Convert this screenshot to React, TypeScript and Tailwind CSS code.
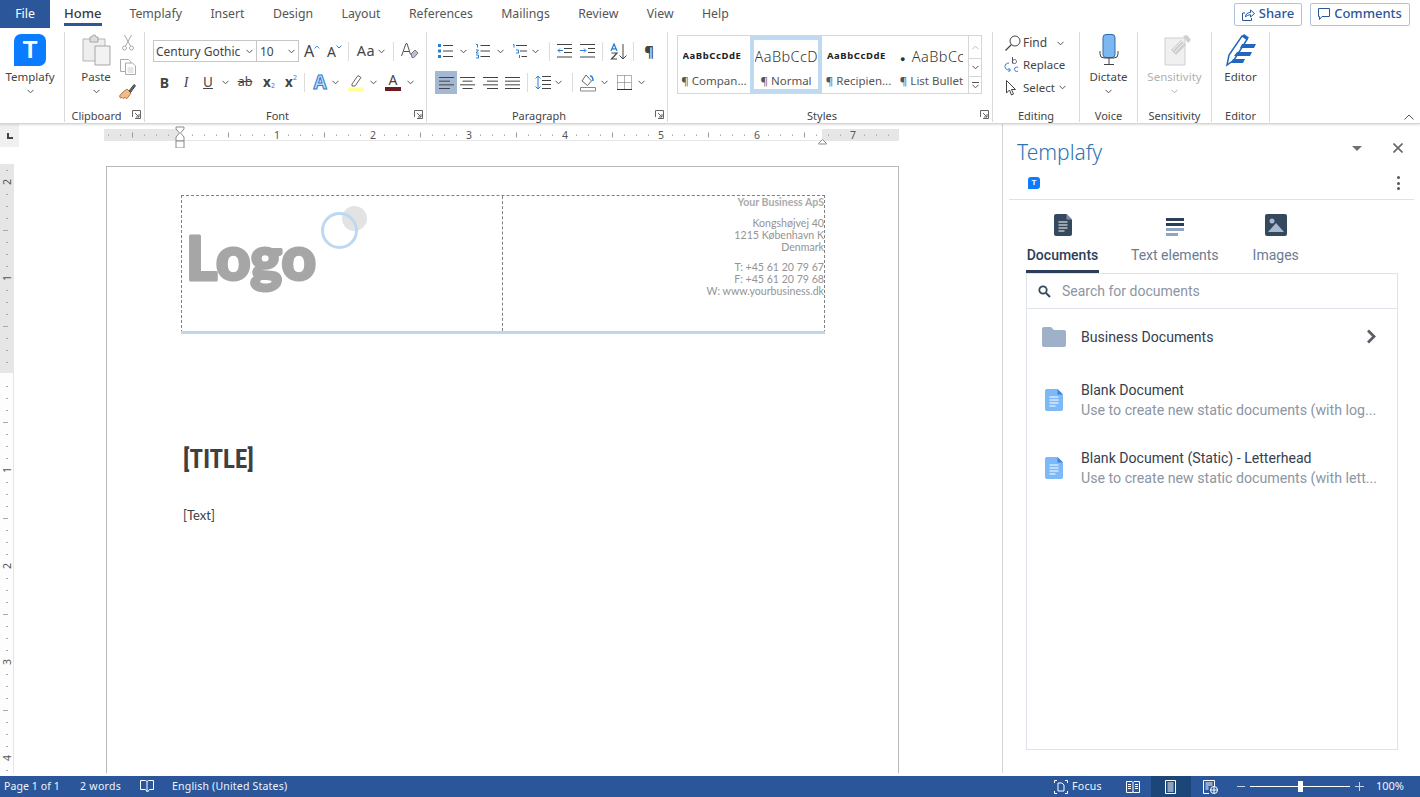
import React from "react";

const Chev = ({ c = "#555", cls = "" }: { c?: string; cls?: string }) => (
  <svg width="7" height="5" viewBox="0 0 7 5" className={"shrink-0 " + cls}><path d="M.5 .8 3.5 3.8 6.5 .8" fill="none" stroke={c} strokeWidth="1" /></svg>
);
const Launcher = () => (
  <svg width="9" height="9" viewBox="0 0 9 9" className="absolute right-[3px] bottom-[3px]"><path d="M.5 7V.5H8.5V8.5H3M3 3l4 4M7 4v3H4" fill="none" stroke="#666" strokeWidth="1" /></svg>
);
const Sep = ({ cls }: { cls: string }) => <div className={"w-px h-[19px] bg-[#dcdcdc] shrink-0 " + cls} />;
const B = ({ cls, children }: { cls: string; children?: React.ReactNode }) => (
  <div className={"flex items-center justify-center shrink-0 h-[22px] " + cls}>{children}</div>
);
const Group = ({ w, label, launcher, children }: { w: string; label: string; launcher?: boolean; children: React.ReactNode }) => (
  <div className={"relative flex flex-col shrink-0 h-[90px] border-r border-[#dadada] " + w}>
    <div className="flex-1 min-h-0">{children}</div>
    <div className={"h-[15px] text-center text-[11px] leading-[17px] text-[#444]" + (launcher ? " pr-[16px]" : "")}>{label}</div>
    {launcher && <Launcher />}
  </div>
);
const Big = ({ icon, label, gray, chev = true }: { icon: React.ReactNode; label: string; gray?: boolean; chev?: boolean }) => (
  <div className="flex flex-col items-center">
    <div className="h-[34px] mt-[1px] flex items-center justify-center">{icon}</div>
    <div className={"mt-[2px] h-[16px] text-[11.5px] leading-[16px] whitespace-nowrap " + (gray ? "text-[#b0b0b0]" : "text-[#444]")}>{label}</div>
    {chev && <Chev c={gray ? "#b0b0b0" : "#555"} cls="mt-[4px]" />}
  </div>
);
const Lines = ({ xs, w = 15 }: { xs: [number, number][]; w?: number }) => (
  <svg width={w} height="14" viewBox={`0 0 ${w} 14`}>
    {xs.map(([a, b], i) => <path key={i} d={`M${a} ${1.5 + i * (11 / (xs.length - 1))}H${b}`} stroke="#444" strokeWidth="1" />)}
  </svg>
);
const Bullets = () => (
  <svg width="15" height="14" viewBox="0 0 15 14"><path d="M0 0h3v3H0zM0 5.500h3v3H0zM0 11h3v3H0z" fill="#2b7cd3" /><path d="M5 1.500h10M5 7h10M5 12.500h10" stroke="#444" /></svg>
);
const Numbers = () => (
  <svg width="15" height="15" viewBox="0 0 15 15"><path d="M1 .5h1.500v3M1 6h2.400L1 9h2.600M1 11h2.500v3H1" fill="none" stroke="#2b7cd3" /><path d="M5.500 1.500H15M5.500 7H15M5.500 12.500H15" stroke="#444" /></svg>
);
const Multi = () => (
  <svg width="15" height="15" viewBox="0 0 15 15"><path d="M1 .5h1v3M4 6h2.500v3H4M7.500 11v3" fill="none" stroke="#2b7cd3" /><path d="M4 1.500H15M8 7H15M9.500 12.500H15" stroke="#444" /></svg>
);
const Outdent = () => (
  <svg width="15" height="14" viewBox="0 0 15 14"><path d="M0 .5h15M7 4.500h8M7 8.500h8M0 13h15" stroke="#444" /><path d="M6 6.500H1M3 4.500l-2 2 2 2" stroke="#2b7cd3" fill="none" /></svg>
);
const Indent = () => (
  <svg width="15" height="14" viewBox="0 0 15 14"><path d="M0 .5h15M8 4.500h7M8 8.500h7M0 13h15" stroke="#444" /><path d="M0 6.500h5.500M4 4.500l2 2-2 2" stroke="#2b7cd3" fill="none" /></svg>
);
const Doc = ({ c, lines = "#fff", fold = "#7d8fa6" }: { c: string; lines?: string; fold?: string }) => (
  <svg width="18" height="22" viewBox="0 0 18 22">
    <path d="M2 0h10.500L18 5.500V20a2 2 0 0 1-2 2H2a2 2 0 0 1-2-2V2a2 2 0 0 1 2-2z" fill={c} />
    <path d="M12.500 0 18 5.500h-5.500z" fill={fold} />
    <path d="M4.500 8h9M4.500 11h9M4.500 14h9M4.500 17h6" stroke={lines} strokeWidth="1.100" />
  </svg>
);
const Tpl = ({ cls, txt }: { cls: string; txt: string }) => (
  <div className={"flex items-center justify-center bg-[#0a7cff] text-white font-bold [font-family:'Liberation_Sans',sans-serif] " + cls + " " + txt}>T</div>
);
const StyleItem = ({ w, preview, label, active }: { w: string; preview: React.ReactNode; label: string; active?: boolean }) => (
  <div className={"flex flex-col items-center h-full shrink-0 overflow-hidden " + w + (active ? " border-[4px] border-[#bfd9f0] pt-[3px]" : " pt-[7px]")}>
    <div className="h-[27px] w-[63px] overflow-hidden flex items-center whitespace-nowrap">{preview}</div>
    <div className="text-[11.5px] leading-[16px] text-[#555] whitespace-nowrap mt-[3px]">{label}</div>
  </div>
);

const vTicks: number[] = [];
for (let y = 6; y < 612; y += 12) vTicks.push(y);

const HRuler = () => (
  <svg width="795" height="23" viewBox="0 0 795 23" className="shrink-0 block">
    <rect x="0" y="4" width="795" height="12" fill="#fff" />
    <rect x="0" y="4" width="76" height="12" fill="#e6e6e6" />
    <rect x="718" y="4" width="77" height="12" fill="#e6e6e6" />
    <path d="M0 15.500H795" stroke="#e6e6e6" />
    {Array.from({ length: 66 }).map((_, i) => {
      const x = 4 + i * 12;
      const rel = i - 6;
      if (((rel % 8) + 8) % 8 === 0) return null;
      if (((rel % 4) + 4) % 4 === 0) return <path key={i} d={`M${x + 0.5} 7.500v5`} stroke="#999" />;
      return <path key={i} d={`M${x + 0.5} 9.500v1.500`} stroke="#aaa" />;
    })}
    {[1, 2, 3, 4, 5, 6, 7].map((n) => (
      <text key={n} x={76 + n * 96 + 1} y="14" fontSize="10.5" fill="#555" textAnchor="middle" fontFamily="'Noto Sans',sans-serif">{n}</text>
    ))}
    <path d="M72 2h8v2l-3.500 4 3.500 4v4h-8v-4l3.500-4L72 4z" fill="#fff" stroke="#8a8a8a" />
    <path d="M72 16h8v7h-8z" fill="#fff" stroke="#8a8a8a" />
    <path d="M714.500 18.500l4-4 4 4v0.500h-8z" fill="#fff" stroke="#8a8a8a" />
  </svg>
);
const VRuler = () => (
  <svg width="14" height="612" viewBox="0 0 14 612" className="block shrink-0">
    <rect x="0" y="0" width="13" height="209" fill="#e6e6e6" />
    <rect x="0" y="209" width="13" height="403" fill="#fdfdfd" />
    <path d="M13.500 0V612" stroke="#e6e6e6" />
    {vTicks.map((y, i) => {
      const rel = i - 17;
      if (((rel % 8) + 8) % 8 === 0) return null;
      return <path key={y} d={((rel % 4) + 4) % 4 === 0 ? `M3 ${y + 0.5}h5` : `M6 ${y + 0.5}h2`} stroke="#aaa" />;
    })}
    {[[18, "2"], [114, "1"], [306, "1"], [402, "2"], [498, "3"], [594, "4"]].map(([y, t]) => (
      <text key={String(y)} transform={`translate(11 ${y}) rotate(-90)`} fontSize="10.5" fill="#555" textAnchor="middle" fontFamily="'Noto Sans',sans-serif">{t}</text>
    ))}
  </svg>
);

export default function App() {
  const tabs = ["Templafy", "Insert", "Design", "Layout", "References", "Mailings", "Review", "View", "Help"];
  return (
    <div className="w-[1420px] h-[797px] overflow-hidden bg-white flex flex-col text-[#444] [font-family:'Noto_Sans',sans-serif]">
      {/* Tab bar */}
      <div className="h-[28px] flex items-center shrink-0">
        <div className="w-[50px] h-full bg-[#2b579a] text-white text-[12.3px] flex items-center justify-center">File</div>
        <div className="flex items-center h-full text-[12.3px] pl-[14px]">
          <div className="relative mr-[28px] h-full flex items-center font-medium text-[#3a3a3a] text-[13px]">
            Home
            <div className="absolute left-0 right-[-1px] top-[23px] h-[3px] bg-[#2b579a]" />
          </div>
          {tabs.map((t) => (
            <div key={t} className="mr-[28.4px] whitespace-nowrap text-[#555]">{t}</div>
          ))}
        </div>
        <div className="ml-auto flex items-center mr-[10px] gap-[8px]">
          <div className="h-[23px] w-[68px] border border-[#b0c4de] rounded-[2px] flex items-center justify-center gap-[4px] text-[13px] font-medium text-[#2b579a]">
            <svg width="13" height="13" viewBox="0 0 13 13"><path d="M3 5H.5v7.500h9V10M3.500 9c0-3 2-4.500 5-4.500V2l4 3.500-4 3.500V6.800c-2 0-4 .7-5 2.200z" fill="none" stroke="#2b579a" /></svg>
            Share
          </div>
          <div className="h-[23px] w-[100px] border border-[#b0c4de] rounded-[2px] flex items-center justify-center gap-[4px] text-[13px] font-medium text-[#2b579a]">
            <svg width="12" height="12" viewBox="0 0 12 12"><path d="M.5 .5h11v8H4L1.500 11.500V8.500H.5z" fill="none" stroke="#2b579a" /></svg>
            Comments
          </div>
        </div>
      </div>

      {/* Ribbon */}
      <div className="relative h-[96px] shrink-0 flex pt-[4px] border-b border-[#d4d4d4] shadow-[0_1px_2px_rgba(0,0,0,0.12)] z-10 bg-white">
        <Group w="w-[65px]" label="">
          <div className="w-[60px]">
            <Big label="Templafy" icon={<Tpl cls="w-[32px] h-[32px] rounded-[7px] rounded-bl-none" txt="text-[24px]" />} />
          </div>
        </Group>

        <Group w="w-[80px]" label="Clipboard" launcher>
          <div className="flex">
            <div className="ml-[15px]">
              <Big
                label="Paste"
                icon={
                  <svg width="30" height="32" viewBox="0 0 30 32" className="ml-[2px]">
                    <path d="M1 5h22v22H1z" fill="#eee" stroke="#b5b5b5" />
                    <path d="M8 3h2a2 2 0 0 1 4 0h2v5H8z" fill="#ddd" stroke="#a5a5a5" />
                    <path d="M13 12h15v19H13z" fill="#f2f2f2" stroke="#a5a5a5" />
                  </svg>
                }
              />
            </div>
            <div className="flex flex-col items-center ml-[7px] mt-[3px] gap-[8px]">
              <svg width="12" height="16" viewBox="0 0 12 16"><path d="M2.500 0l6 11M9.500 0l-6 11" stroke="#aaa" fill="none" /><circle cx="2.500" cy="13" r="2" fill="none" stroke="#aaa" /><circle cx="9.500" cy="13" r="2" fill="none" stroke="#aaa" /></svg>
              <svg width="16" height="16" viewBox="0 0 16 16"><path d="M.5 .5h8l2 2v10H.5z" fill="#fff" stroke="#aaa" /><path d="M5.500 4h7l3 3v8.500h-10z" fill="#fff" stroke="#aaa" /><path d="M7.500 9h6M7.500 11h6M7.500 13h6" stroke="#ccc" /></svg>
              <svg width="17" height="16" viewBox="0 0 17 16"><path d="M8 6l4 4-4 5.500-2-1L4 15.500l-1-1-1.500.5L.5 13l2.500-3z" fill="#eebd8b" stroke="#b5763c" /><path d="M10 8l5-6.500 1.500 1.200-5 6.800z" fill="#666" stroke="#444" /></svg>
            </div>
          </div>
        </Group>

        <Group w="w-[282px]" label="Font" launcher>
          <div className="flex items-center h-[22px] mt-[8px] text-[#444]">
            <div className="ml-[8px] w-[104px] h-[22px] border border-[#c6c6c6] flex items-center pl-[2px] pr-[3px] pt-px text-[12px] shrink-0 justify-between">
              Century Gothic <Chev />
            </div>
            <div className="ml-[-1px] w-[43px] h-[22px] border border-[#c6c6c6] flex items-center pl-[3px] pr-[3px] pt-px text-[12px] shrink-0 justify-between">
              10 <Chev />
            </div>
            <B cls="ml-[5px] w-[16px] text-[16px]">A<svg width="6" height="4" viewBox="0 0 6 4" className="mb-[8px]"><path d="M.5 3.500 3 1l2.500 2.500" fill="none" stroke="#2b7cd3" /></svg></B>
            <B cls="ml-[7px] w-[15px] text-[14px]">A<svg width="6" height="4" viewBox="0 0 6 4" className="mb-[8px]"><path d="M.5 .5 3 3l2.500-2.500" fill="none" stroke="#2b7cd3" /></svg></B>
            <Sep cls="ml-[6px]" />
            <B cls="ml-[7px] w-[20px] text-[14.5px] tracking-[0.5px]">Aa</B>
            <Chev cls="ml-[2px]" />
            <Sep cls="ml-[8px]" />
            <B cls="ml-[7px] w-[18px]">
              <svg width="18" height="17" viewBox="0 0 18 17"><path d="M.5 13 5 .5h1l3.500 11M2.500 8.500h6" stroke="#555" fill="none" /><path d="M10 11l4-4 3 3-4 4.500h-2z" fill="#c5b8d8" stroke="#777" /></svg>
            </B>
          </div>
          <div className="flex items-center h-[22px] mt-[9px] text-[#444]">
            <B cls="ml-[15px] w-[9px] text-[14px] font-bold">B</B>
            <B cls="ml-[13px] w-[8px] text-[14px] italic [font-family:'Liberation_Serif',serif]">I</B>
            <B cls="ml-[13px] w-[10px] text-[13.5px] underline">U</B>
            <Chev cls="ml-[9px]" />
            <B cls="ml-[8px] w-[16px] text-[12.5px] line-through">ab</B>
            <B cls="ml-[10px] w-[12px] text-[13.5px] font-bold">x<span className="text-[7px] font-normal text-[#2b7cd3] mt-[8px]">2</span></B>
            <B cls="ml-[10px] w-[12px] text-[13.5px] font-bold">x<span className="text-[7px] font-normal text-[#2b7cd3] mb-[8px]">2</span></B>
            <Sep cls="ml-[7px]" />
            <B cls="ml-[7px] w-[16px]">
              <span className="text-[19px] font-bold leading-none text-[#bcdcf7] [-webkit-text-stroke:1px_#2b7cd3]">A</span>
            </B>
            <Chev cls="ml-[4px]" />
            <B cls="ml-[9px] w-[16px]">
              <svg width="16" height="17" viewBox="0 0 16 17"><path d="M4 10 10 1.500l3 2-6 8.500H4z" fill="#fff" stroke="#666" /><path d="M0 13.500h16V17H0z" fill="#ffff99" /></svg>
            </B>
            <Chev cls="ml-[6px]" />
            <B cls="ml-[8px] w-[16px]">
              <div className="flex flex-col items-center w-full">
                <span className="text-[14px] leading-[14px] text-[#444]">A</span>
                <div className="w-full h-[4px] bg-[#6b1c23]" />
              </div>
            </B>
            <Chev cls="ml-[6px]" />
          </div>
        </Group>

        <Group w="w-[241px]" label="Paragraph" launcher>
          <div className="flex items-center h-[22px] mt-[8px]">
            <B cls="ml-[11px] w-[15px]"><Bullets /></B>
            <Chev cls="ml-[7px]" />
            <B cls="ml-[8px] w-[15px]"><Numbers /></B>
            <Chev cls="ml-[7px]" />
            <B cls="ml-[8px] w-[15px]"><Multi /></B>
            <Chev cls="ml-[5px]" />
            <Sep cls="ml-[10px]" />
            <B cls="ml-[7px] w-[15px]"><Outdent /></B>
            <B cls="ml-[8px] w-[15px]"><Indent /></B>
            <Sep cls="ml-[7px]" />
            <B cls="ml-[7px] w-[17px]">
              <svg width="17" height="17" viewBox="0 0 17 17">
                <path d="M1 8 4 1l3 7M2 5.800h4" fill="none" stroke="#2b7cd3" strokeWidth="1.300" />
                <path d="M1.500 10h5.500l-5.500 6h5.500" fill="none" stroke="#444" strokeWidth="1.200" />
                <path d="M13 1v15M9.500 12.500 13 16l3.500-3.500" fill="none" stroke="#444" />
              </svg>
            </B>
            <Sep cls="ml-[6px]" />
            <B cls="ml-[9px] w-[12px] text-[15px] font-bold">¶</B>
          </div>
          <div className="flex items-center h-[23px] mt-[9px]">
            <div className="ml-[8px] w-[22px] h-[23px] bg-[#a4b8d3] flex items-center justify-center shrink-0">
              <Lines xs={[[0, 15], [0, 11], [0, 15], [0, 11]]} />
            </div>
            <B cls="ml-[3px] w-[15px]"><Lines xs={[[0, 15], [2.5, 12.5], [0, 15], [2.5, 12.5]]} /></B>
            <B cls="ml-[8px] w-[15px]"><Lines xs={[[0, 15], [4, 15], [0, 15], [4, 15]]} /></B>
            <B cls="ml-[7px] w-[15px]"><Lines xs={[[0, 15], [0, 15], [0, 15], [0, 15]]} /></B>
            <Sep cls="ml-[7px]" />
            <B cls="ml-[7px] w-[16px]">
              <svg width="16" height="15" viewBox="0 0 16 15"><path d="M3 1v13M.5 3.500 3 1l2.500 2.500M.5 11.500 3 14l2.500-2.500" fill="none" stroke="#2b7cd3" /><path d="M7 1.500h9M7 5.500h9M7 9.500h9M7 13.500h9" stroke="#444" /></svg>
            </B>
            <Chev cls="ml-[4px]" />
            <Sep cls="ml-[10px]" />
            <B cls="ml-[7px] w-[16px]">
              <svg width="16" height="18" viewBox="0 0 16 18"><path d="M6 1l5.500 6-4 4.500L2 7z" fill="#fff" stroke="#666" /><path d="M10 2c2 0 3 2 3 5" fill="none" stroke="#2b7cd3" strokeWidth="1.500" /><path d="M.5 13.500h15v3.500H.5z" fill="#fff" stroke="#888" /></svg>
            </B>
            <Chev cls="ml-[5px]" />
            <B cls="ml-[9px] w-[15px]">
              <svg width="15" height="15" viewBox="0 0 15 15"><path d="M.5 .5h14M.5 .5v14M14.500 .5v14M7.500 .5v14M.5 7.500h14" stroke="#666" strokeDasharray="1 1" fill="none" /><path d="M0 14.500h15" stroke="#333" /></svg>
            </B>
            <Chev cls="ml-[6px]" />
          </div>
        </Group>

        <Group w="w-[325px]" label="Styles" launcher>
          <div className="ml-[9px] mt-[3px] w-[305px] h-[59px] border border-[#d6d6d6] flex">
            <StyleItem w="w-[72px]" label="¶ Compan..." preview={<span className="text-[9.5px] font-bold text-[#222] tracking-[0.55px]">AaBbCcDdE</span>} />
            <StyleItem w="w-[72px]" active label="¶ Normal" preview={<span className="text-[14.5px] text-[#333] font-light tracking-[0.4px]">AaBbCcD</span>} />
            <StyleItem w="w-[73px]" label="¶ Recipien..." preview={<span className="text-[9.5px] font-bold text-[#222] tracking-[0.55px]">AaBbCcDdE</span>} />
            <StyleItem w="w-[73px]" label="¶ List Bullet" preview={<span className="text-[14.5px] text-[#333] font-light tracking-[0.4px]"><span className="text-[9px] mr-[6px]">●</span>AaBbCc</span>} />
            <div className="flex flex-col w-[14px] shrink-0 border-l border-[#d6d6d6]">
              <div className="h-[22px] flex items-center justify-center"><Chev c="#bbb" cls="rotate-180" /></div>
              <div className="h-[19px] border-y border-[#d6d6d6] flex items-center justify-center"><Chev /></div>
              <div className="flex-1 flex flex-col items-center justify-center gap-[1px]"><div className="w-[7px] h-px bg-[#555]" /><Chev /></div>
            </div>
          </div>
        </Group>

        <Group w="w-[87px]" label="Editing">
          <div className="flex flex-col text-[12px] text-[#444] mt-[1px]">
            <div className="flex items-center h-[20px]">
              <svg width="16" height="17" viewBox="0 0 16 17" className="ml-[12px]"><circle cx="10" cy="6" r="5" fill="none" stroke="#444" /><path d="M6.500 9.500.5 15.500" stroke="#444" strokeWidth="1.300" /></svg>
              <span className="ml-[2px]">Find</span>
              <Chev cls="ml-[10px]" />
            </div>
            <div className="flex items-center h-[23px]">
              <svg width="15" height="17" viewBox="0 0 15 17" className="ml-[11px]">
                <path d="M5 7C2.500 7 1 8.500 1 10.500S2.500 14 5 14h1M4.500 12l2 2-2 2" fill="none" stroke="#2b7cd3" />
                <path d="M8.500 1v6.500M8.500 5.500a2 2 0 1 1 0 .1" fill="none" stroke="#555" />
                <path d="M14 11.500a2.200 2.200 0 1 0 0 3.500" fill="none" stroke="#2b7cd3" />
              </svg>
              <span className="ml-[4px] text-[11.5px]">Replace</span>
            </div>
            <div className="flex items-center h-[23px]">
              <svg width="12" height="16" viewBox="0 0 12 16" className="ml-[13px]"><path d="M.5 .5v12.500l3-3 2 5 2-1-2-4.500h4z" fill="#fff" stroke="#444" /></svg>
              <span className="ml-[5px] text-[11.5px]">Select</span>
              <Chev cls="ml-[4px]" />
            </div>
          </div>
        </Group>

        <Group w="w-[58px]" label="Voice">
          <Big
            label="Dictate"
            icon={
              <svg width="20" height="32" viewBox="0 0 20 32">
                <rect x="4" y="0.500" width="12" height="23" rx="3" fill="#7cb7f0" stroke="#2b6cb0" />
                <path d="M1 17v3a4 4 0 0 0 4 4h10a4 4 0 0 0 4-4v-3M10 24v6M5 30.500h10" fill="none" stroke="#444" />
              </svg>
            }
          />
        </Group>

        <Group w="w-[74px]" label="Sensitivity">
          <Big
            label="Sensitivity"
            gray
            icon={
              <svg width="28" height="32" viewBox="0 0 28 32" className="ml-[6px]">
                <path d="M1 4h20v27H1z" fill="#f0f0f0" stroke="#cfcfcf" />
                <path d="M7 16 17 6l5 5-10 10z" fill="#cfcfcf" />
                <path d="M19 2l4-1 4 5-3 3z" fill="#cfcfcf" />
                <path d="M9 16l9-9M11 18l9-9" stroke="#f0f0f0" />
              </svg>
            }
          />
        </Group>

        <Group w="w-[58px]" label="Editor">
          <Big
            chev={false}
            label="Editor"
            icon={
              <svg width="31" height="34" viewBox="0 0 31 34">
                <path d="M2 32 4 22 17 3l5 3.500L9 27z" fill="#fff" stroke="#2167c0" strokeWidth="1.500" />
                <path d="M17 3l2-2 5 3.500-2 2.500z" fill="#2167c0" />
                <path d="M17 11h14l-2 4H15zM12 19h15l-2 4H9zM8 26h12l-2 4H6z" fill="#2167c0" />
              </svg>
            }
          />
        </Group>

        <svg width="10" height="6" viewBox="0 0 10 6" className="absolute right-[6px] bottom-[3px]"><path d="M.5 5.500 5 1l4.500 4.500" fill="none" stroke="#555" /></svg>
      </div>

      {/* Main */}
      <div className="flex-1 flex min-h-0">
        <div className="w-[1003px] shrink-0 border-r border-[#d4d4d4] flex flex-col overflow-hidden mb-[3px]">
          <div className="flex h-[40px] shrink-0">
            <div className="w-[19px] h-[23px] bg-[#f0f0f0] flex items-center justify-center shrink-0">
              <svg width="6" height="6" viewBox="0 0 6 6"><path d="M1 0v5h5" fill="none" stroke="#444" strokeWidth="2" /></svg>
            </div>
            <div className="ml-[85px] mt-px"><HRuler /></div>
          </div>
          <div className="flex flex-1 min-h-0">
            <VRuler />
            <div className="ml-[92px] mt-[2px] w-[793px] h-[700px] border border-[#b8b8b8] shrink-0 bg-white">
              <div className="ml-[74px] mt-[28px] w-[644px] h-[138px] flex border-x border-t border-dashed border-[#808080] relative">
                <div className="w-[321px] h-[135px] border-r border-dashed border-[#808080] relative shrink-0 overflow-hidden">
                  <svg width="150" height="80" viewBox="0 0 150 80" className="absolute left-[1px] top-[30px]">
                    <text x="3" y="54" fontSize="61" fontWeight="900" fill="#a6a6a6" stroke="#a6a6a6" strokeWidth="3" strokeLinejoin="round" textLength="130" lengthAdjust="spacingAndGlyphs" fontFamily="'Lato',sans-serif">Logo</text>
                  </svg>
                  <div className="absolute left-[160px] top-[10px] w-[25px] h-[25px] rounded-full bg-[#e3e3e3]" />
                  <div className="absolute left-[139px] top-[16px] w-[37px] h-[37px] rounded-full border-[3px] border-[#bdd9f2]" />
                </div>
                <div className="flex-1 h-[135px] overflow-hidden flex flex-col items-end text-[10.6px] leading-[12px] text-[#949494] whitespace-nowrap [font-family:'Lato',sans-serif]">
                  <div className="font-bold text-[#ababab]">Your Business ApS</div>
                  <div className="mt-[9px]">Kongshøjvej 40</div>
                  <div>1215 København K</div>
                  <div>Denmark</div>
                  <div className="mt-[8px]">T: +45 61 20 79 67</div>
                  <div>F: +45 61 20 79 68</div>
                  <div>W: www.yourbusiness.dk</div>
                </div>
                <div className="absolute left-[-1px] right-[-1px] bottom-[-1px] h-[3px] bg-[#bdd7ee]" />
              </div>
              <div className="ml-[76px] mt-[109px] text-[25px] leading-[36px] font-bold text-[#404040] [font-family:'Liberation_Sans_Narrow','Roboto_Condensed','Liberation_Sans',sans-serif]">[TITLE]</div>
              <div className="ml-[76px] mt-[28px] text-[13px] leading-[18px] text-[#404040] [font-family:'Lato',sans-serif]">[Text]</div>
            </div>
          </div>
        </div>

        {/* Side pane */}
        <div className="flex-1 min-w-0 [font-family:'Roboto',sans-serif]">
          <div className="h-[50px] flex items-start relative">
            <div className="ml-[14px] mt-[14px] text-[21px] leading-[28px] font-light text-[#2e74b5] [font-family:'Noto_Sans',sans-serif]">Templafy</div>
            <svg width="10" height="5" viewBox="0 0 10 5" className="ml-[250px] mt-[22px]"><path d="M0 0h10L5 5z" fill="#707070" /></svg>
            <svg width="10" height="10" viewBox="0 0 10 10" className="ml-[31px] mt-[19px]"><path d="M.5 .5l9 9M9.500 .5l-9 9" stroke="#666" strokeWidth="1.600" /></svg>
          </div>
          <div className="h-[26px] mx-[6px] border-b border-[#dde2ec] flex items-start">
            <Tpl cls="ml-[19px] mt-[3px] w-[12px] h-[12px] rounded-[3px] rounded-bl-none" txt="text-[8px]" />
            <div className="ml-auto mr-[14px] mt-[2px] flex flex-col gap-[2.5px]">
              <div className="w-[3px] h-[3px] rounded-full bg-[#555]" />
              <div className="w-[3px] h-[3px] rounded-full bg-[#555]" />
              <div className="w-[3px] h-[3px] rounded-full bg-[#555]" />
            </div>
          </div>
          <div className="ml-[23px] mr-[22px] flex flex-col">
            <div className="flex h-[73px] text-[14px] text-[#6b7c93]">
              <div className="w-[73px] border-b-[3px] border-[#2c3e5a] flex flex-col items-center pt-[14px] text-[#2c3e5a] font-medium">
                <Doc c="#34495e" />
                <div className="mt-[9px] leading-[20px]">Documents</div>
              </div>
              <div className="ml-[32px] flex flex-col items-center pt-[18px]">
                <svg width="18" height="18" viewBox="0 0 18 18"><path d="M0 0h18v3H0zM0 5h18v3H0z" fill="#2c3e5a" /><path d="M0 10h18v3H0z" fill="#8ea6c4" /><path d="M0 15h12v3H0z" fill="#8ea6c4" /></svg>
                <div className="mt-[9px] leading-[20px]">Text elements</div>
              </div>
              <div className="ml-[34px] flex flex-col items-center pt-[14px]">
                <svg width="22" height="22" viewBox="0 0 22 22"><rect width="22" height="22" rx="2" fill="#34495e" /><circle cx="7" cy="7" r="2.500" fill="#a5b8d0" /><path d="M3 18l8-9 8 9z" fill="#a5b8d0" /></svg>
                <div className="mt-[9px] leading-[20px]">Images</div>
              </div>
            </div>
            <div className="w-[372px] h-[477px] border border-[#dfe3ee] text-[14.1px]">
              <div className="h-[35px] border-b border-[#dfe3ee] flex items-center">
                <svg width="13" height="13" viewBox="0 0 13 13" className="ml-[11px]"><circle cx="5" cy="5" r="3.700" fill="none" stroke="#34495e" strokeWidth="1.800" /><path d="M8 8l4 4" stroke="#34495e" strokeWidth="2" /></svg>
                <span className="ml-[11px] text-[#8c96a3] text-[14px]">Search for documents</span>
              </div>
              <div className="flex items-center h-[58px]">
                <svg width="24" height="20" viewBox="0 0 24 20" className="ml-[15px] mb-[3px]"><path d="M2 0h7l3 3h10a2 2 0 0 1 2 2v13a2 2 0 0 1-2 2H2a2 2 0 0 1-2-2V2a2 2 0 0 1 2-2z" fill="#9fb0c9" /></svg>
                <span className="ml-[15px] text-[#36404e]">Business Documents</span>
                <svg width="11" height="15" viewBox="0 0 11 15" className="ml-auto mr-[20px] mb-[4px]"><path d="M2 1.500 8 7.500 2 13.500" fill="none" stroke="#5a6068" strokeWidth="2.800" /></svg>
              </div>
              {[
                "Blank Document|Use to create new static documents (with log...",
                "Blank Document (Static) - Letterhead|Use to create new static documents (with lett...",
              ].map((r, i) => (
                <div key={r} className={"flex items-center h-[68px]" + (i === 0 ? " mt-[-1px]" : "")}>
                  <div className="ml-[18px] w-[18px] shrink-0"><Doc c="#7db8f7" fold="#3a86de" /></div>
                  <div className="ml-[18px] leading-[20px] whitespace-nowrap">
                    <div className="text-[#36404e]">{r.split("|")[0]}</div>
                    <div className="text-[#8c96a3] text-[14.2px]">{r.split("|")[1]}</div>
                  </div>
                </div>
              ))}
            </div>
          </div>
        </div>
      </div>

      {/* Status bar */}
      <div className="h-[21px] shrink-0 bg-[#2b579a] text-[#f0f4fa] text-[10.5px] flex items-center">
        <span className="ml-[4px] w-[76px] tracking-[0.1px]">Page 1 of 1</span>
        <span className="w-[60px] tracking-[0.3px]">2 words</span>
        <svg width="14" height="13" viewBox="0 0 14 13"><path d="M.5 .5h5l1.500 1 1.500-1h5v9h-4l-2 2.500-2-2.500h-5zM7 1.500v10" fill="none" stroke="#fff" /></svg>
        <span className="ml-[18px] tracking-[0.2px]">English (United States)</span>
        <svg width="14" height="14" viewBox="0 0 14 14" className="ml-auto"><path d="M.5 3V.5H3M11 .5h2.500V3M13.500 11v2.500H11M3 13.500H.5V11M4 3h4l2 2v6H4z" fill="none" stroke="#fff" /></svg>
        <span className="ml-[4px] tracking-[0.3px]">Focus</span>
        <svg width="14" height="12" viewBox="0 0 14 12" className="ml-[24px] mr-[-2px]"><path d="M.5 .5h5.500L7 1.500 8 .5h5.500v11H8L7 11l-1 .5H.5zM7 1.500V11M2 3.500h3M2 5.500h3M2 7.500h3M9 3.500h3M9 5.500h3M9 7.500h3" fill="none" stroke="#fff" /></svg>
        <div className="ml-[13px] w-[40px] h-full bg-[#1c4678] flex items-center justify-center">
          <svg width="11" height="14" viewBox="0 0 11 14"><path d="M.5 .5h10v13H.5zM2.500 3h6M2.500 5h6M2.500 7h6M2.500 9h6M2.500 11h6" fill="none" stroke="#fff" /></svg>
        </div>
        <svg width="15" height="14" viewBox="0 0 15 14" className="ml-[12px] mr-[2px]"><path d="M.5 .5h11v6M6 13.500H.5V.5M2.500 3h7M2.500 5h7M2.500 7h3M2.500 9h3" fill="none" stroke="#fff" /><circle cx="11" cy="10" r="3.500" fill="none" stroke="#fff" /><path d="M7.500 10h7M11 6.500v7" stroke="#fff" /></svg>
        <div className="ml-[17px] w-[8px] h-px bg-[#c8d4e6]" />
        <div className="ml-[5px] w-[100px] h-px bg-white relative">
          <div className="absolute left-[48px] top-[-5px] w-[5px] h-[11px] bg-white" />
        </div>
        <svg width="9" height="9" viewBox="0 0 9 9" className="ml-[5px]"><path d="M0 4.500h9M4.500 0v9" stroke="#c8d4e6" /></svg>
        <span className="ml-[12px] mr-[16px] text-[11px]">100%</span>
      </div>
    </div>
  );
}
